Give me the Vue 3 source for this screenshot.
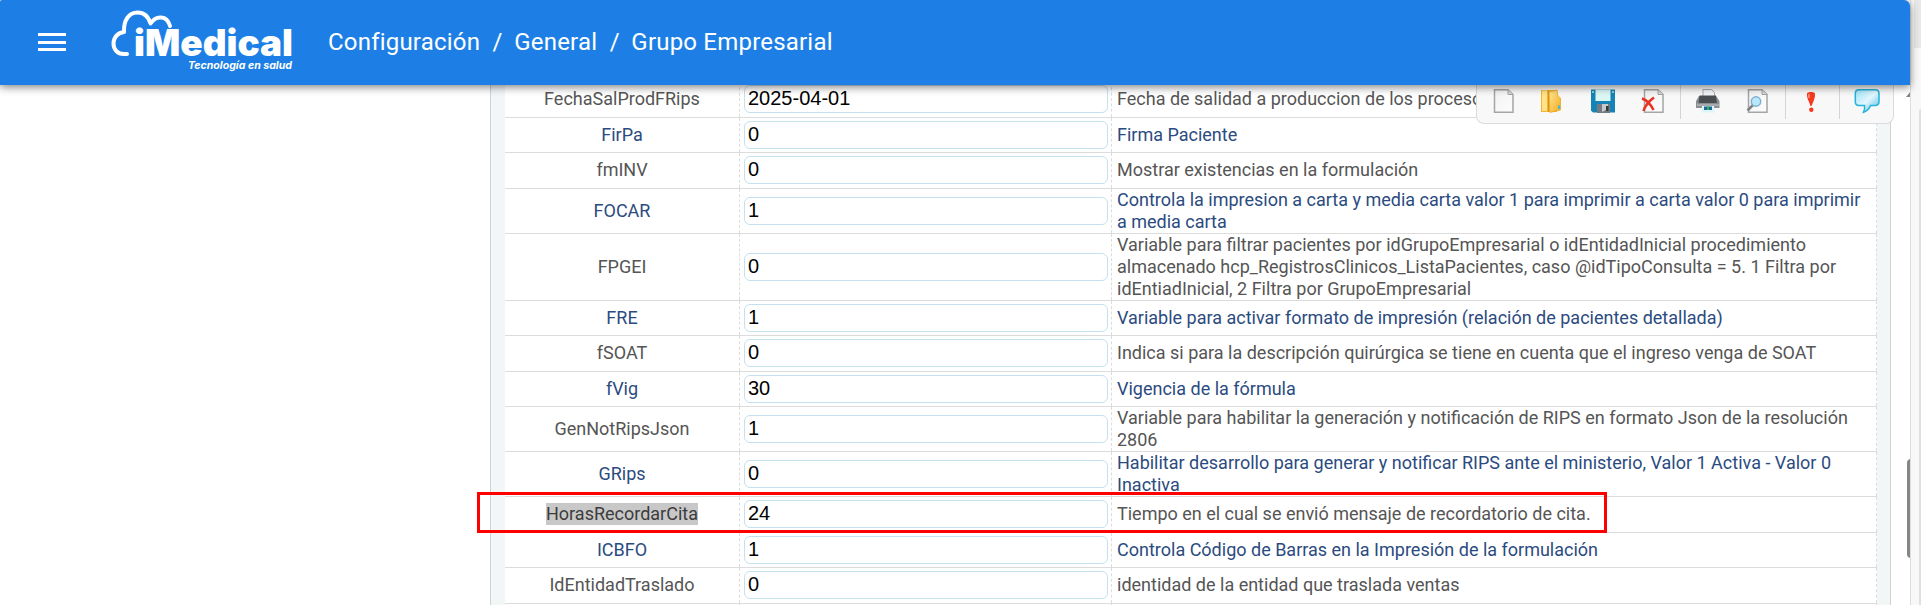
<script setup>
const crumbs = ["Configuración", "General", "Grupo Empresarial"];

const rows = [
  { name: "FechaSalProdFRips", value: "2025-04-01", lines: ["Fecha de salidad a produccion de los procesos"], height: 36 },
  { name: "FirPa", value: "0", lines: ["Firma Paciente"], height: 35 },
  { name: "fmINV", value: "0", lines: ["Mostrar existencias en la formulación"], height: 36 },
  {
    name: "FOCAR",
    value: "1",
    lines: [
      "Controla la impresion a carta y media carta valor 1 para imprimir a carta valor 0 para imprimir",
      "a media carta",
    ],
    height: 45,
  },
  {
    name: "FPGEI",
    value: "0",
    lines: [
      "Variable para filtrar pacientes por idGrupoEmpresarial o idEntidadInicial procedimiento",
      "almacenado hcp_RegistrosClinicos_ListaPacientes, caso @idTipoConsulta = 5. 1 Filtra por",
      "idEntiadInicial, 2 Filtra por GrupoEmpresarial",
    ],
    height: 67,
  },
  { name: "FRE", value: "1", lines: ["Variable para activar formato de impresión (relación de pacientes detallada)"], height: 35 },
  { name: "fSOAT", value: "0", lines: ["Indica si para la descripción quirúrgica se tiene en cuenta que el ingreso venga de SOAT"], height: 36 },
  { name: "fVig", value: "30", lines: ["Vigencia de la fórmula"], height: 35 },
  {
    name: "GenNotRipsJson",
    value: "1",
    lines: ["Variable para habilitar la generación y notificación de RIPS en formato Json de la resolución", "2806"],
    height: 45,
  },
  {
    name: "GRips",
    value: "0",
    lines: ["Habilitar desarrollo para generar y notificar RIPS ante el ministerio, Valor 1 Activa - Valor 0", "Inactiva"],
    height: 45,
  },
  {
    name: "HorasRecordarCita",
    value: "24",
    lines: ["Tiempo en el cual se envió mensaje de recordatorio de cita."],
    height: 36,
    selected: true,
  },
  { name: "ICBFO", value: "1", lines: ["Controla Código de Barras en la Impresión de la formulación"], height: 35 },
  { name: "IdEntidadTraslado", value: "0", lines: ["identidad de la entidad que traslada ventas"], height: 36 },
  { name: "", value: "", lines: [], height: 35 },
];
</script>

<template>
  <div class="page">
    <header class="header">
      <div class="menu"><i></i><i></i><i></i></div>
      <svg class="logo" width="184" height="65" viewBox="0 0 184 65">
        <path
          class="cloud"
          d="M16 45H13C6 45 2.500 40 2.500 34.500C2.500 28.500 7 23.500 13 23C12.500 11 18 3.500 26.500 3.500C33 3.500 37.500 8 39.500 14.500C45 6 56 6 59 17"
        />
        <text class="brand" x="23" y="46.5" textLength="159" lengthAdjust="spacingAndGlyphs">iMedical</text>
        <text class="slogan" x="77" y="59.5" textLength="104" lengthAdjust="spacingAndGlyphs">Tecnología en salud</text>
      </svg>
      <nav class="crumbs">
        <template v-for="(crumb, i) in crumbs" :key="crumb">
          <span v-if="i" class="slash">/</span>
          <span>{{ crumb }}</span>
        </template>
      </nav>
    </header>

    <main class="body">
      <div class="panel">
        <div class="table">
          <div
            v-for="(row, i) in rows"
            :key="i"
            class="row"
            :class="{ alt: i % 2 === 1, loose: row.height === 36 }"
            :style="{ height: row.height + 'px' }"
          >
            <div class="name">
              <span :class="{ selected: row.selected }">{{ row.name }}</span>
            </div>
            <div class="value">
              <div class="input">{{ row.value }}</div>
            </div>
            <div class="desc">
              <div v-for="line in row.lines" :key="line">{{ line }}</div>
            </div>
            <div v-if="row.selected" class="highlight"></div>
          </div>
        </div>
      </div>
      <div class="scroll">
        <div class="arrow"></div>
        <div class="thumb"></div>
      </div>
    </main>

    <aside class="side">
      <div class="side-top"></div>
      <div class="side-card"></div>
    </aside>

    <div class="toolbar">
      <svg width="417" height="40" viewBox="1477 84 417 40">
        <defs>
          <linearGradient id="paper" x1="0" y1="0" x2="1" y2="1">
            <stop offset="0" stop-color="#f1f1f1" />
            <stop offset="1" stop-color="#fdfdfd" />
          </linearGradient>
          <linearGradient id="gold" x1="0" y1="0" x2="1" y2="1">
            <stop offset="0" stop-color="#ffe79a" />
            <stop offset="1" stop-color="#f2ac1c" />
          </linearGradient>
          <linearGradient id="bubble" x1="0" y1="0" x2="1" y2="1">
            <stop offset="0" stop-color="#9be4f8" />
            <stop offset="0.5" stop-color="#e2f6fd" />
            <stop offset="1" stop-color="#4bb9e8" />
          </linearGradient>
        </defs>
        <path class="sep" d="M1680.5 84V119M1785.5 84V119M1839.5 84V119" />
        <!-- new -->
        <path class="sheet" d="M1494.500 89.700H1508L1513 94.500V112.300H1494.500Z" />
        <path class="fold" d="M1508 90V94.500H1513" />
        <!-- open -->
        <path d="M1541 90H1557V112H1541Z" fill="#f3b52d" />
        <path d="M1542 90.500H1547V111H1542Z" fill="#ffe28a" />
        <path d="M1549 92L1557 90L1558 96L1560.500 98V110L1550 112.500Z" fill="url(#gold)" stroke="#e8a41b" stroke-width="0.700" />
        <path d="M1548.500 90.500V112" stroke="#d99418" />
        <path d="M1558 105.500H1560V109H1558Z" fill="#45b6d4" />
        <!-- save -->
        <path d="M1591 89.500H1615V112.500H1593L1591 110.500Z" fill="#1583b5" />
        <path d="M1595.500 89.500H1610.500V101H1595.500Z" fill="#dcf6f3" />
        <path d="M1597 104H1610V113H1597Z" fill="#737b80" />
        <path d="M1602 104H1608V109L1602 112Z" fill="#c5cacc" />
        <path d="M1606 106H1608.500V111H1606Z" fill="#34393b" />
        <path d="M1592 91H1594V93H1592ZM1612 91H1614V93H1612Z" fill="#7fd0e4" />
        <!-- delete -->
        <path class="sheet" d="M1644.500 89.700H1658L1663 94.500V112.300H1644.500Z" />
        <path class="fold" d="M1658 90V94.500H1663" />
        <path d="M1642 98.500C1647 100 1651 105 1653.500 110M1654 97.500C1649 101 1645 106 1643.500 111" class="cross" />
        <!-- print -->
        <path d="M1703 89.500H1711.500L1714.500 92.500V98H1703Z" fill="#f2f5f6" stroke="#a6abad" />
        <path d="M1699 96H1716L1719.500 101V108H1696V101Z" fill="#8a8e90" />
        <path d="M1699.500 95.500H1716L1717 103H1698.500Z" fill="#4b4e50" />
        <path d="M1697 105H1719" stroke="#c6c9ca" />
        <path d="M1702 106H1714L1715 112.500H1701.500Z" fill="#def3fa" />
        <path d="M1704 106.500H1712V110H1704Z" fill="#166d94" />
        <path d="M1707 106.500H1709V110H1707Z" fill="#46a863" />
        <!-- preview -->
        <path class="sheet" d="M1748.500 89.700H1762L1767 94.500V112.300H1748.500Z" />
        <path class="fold" d="M1762 90V94.500H1767" />
        <path d="M1753 105L1747.500 110.500" stroke="#7e8283" stroke-width="2.500" />
        <circle cx="1756" cy="101.500" r="4.700" fill="#b9e7fb" stroke="#7fb0d0" stroke-width="1.500" />
        <!-- alert -->
        <path d="M1807 93.500C1808 91.500 1814 91.500 1815 93.500C1815.500 98 1813 102 1811.500 106H1810.500C1809.500 102 1806.500 98 1807 93.500Z" fill="#f5391f" />
        <circle cx="1811.300" cy="109.800" r="2.200" fill="#f5391f" />
        <path d="M1809 94V98" stroke="#ff9a80" stroke-width="1.500" />
        <!-- chat -->
        <path
          d="M1859 89.800H1875C1878 89.800 1879 91 1879 93.500V101.500C1879 104.500 1877.500 105.500 1875 105.500H1870.500C1869.500 108.500 1867 111 1863.500 112.300C1864.500 110 1865 108 1864.500 105.500H1859C1856.500 105.500 1855.300 104 1855.300 101.500V93.500C1855.300 91 1856.500 89.800 1859 89.800Z"
          fill="url(#bubble)"
          stroke="#23b3dc"
          stroke-width="1.500"
        />
      </svg>
    </div>
  </div>
</template>

<style>
body {
  margin: 0;
  overflow: hidden;
}
</style>

<style scoped>
.page {
  position: relative;
  display: grid;
  grid-template-columns: 1911px 10px;
  grid-template-rows: 85px 520px;
  width: 1921px;
  height: 605px;
  overflow: hidden;
  background: #fff;
  font-family: Roboto, sans-serif;
}

.header {
  position: relative;
  z-index: 3;
  display: flex;
  align-items: center;
  box-sizing: border-box;
  width: 1910px;
  padding-left: 38px;
  color: #fff;
  background: #1d7fe5;
  border-radius: 2px 6px 0 0;
  box-shadow: 0 2px 9px rgba(0, 0, 0, 0.5);
}

.menu {
  display: flex;
  flex-direction: column;
  gap: 4.5px;
  width: 28px;
  margin-top: -1px;
}

.menu i {
  height: 3px;
  background: #fff;
}

.logo {
  margin: -2px 0 0 45px;
  overflow: visible;
}

.cloud {
  fill: none;
  stroke: #fff;
  stroke-width: 4;
  stroke-linecap: round;
  stroke-linejoin: round;
}

.brand {
  fill: #fff;
  font: 900 36.5px Inter, sans-serif;
}

.slogan {
  fill: #fff;
  font: italic 700 10.5px Inter, sans-serif;
}

.crumbs {
  display: flex;
  margin: -2px 0 0 33px;
  font-size: 24px;
  line-height: 32px;
  letter-spacing: 0.2px;
  white-space: nowrap;
}

.slash {
  margin: 0 11.5px 0 12.5px;
}

.body {
  display: flex;
  height: 520px;
  overflow: hidden;
}

.panel {
  box-sizing: border-box;
  width: 1401px;
  margin-left: 490px;
  padding: 0 13px 0 14px;
  background: #f3f6f7;
  border: solid #cfd3d5;
  border-width: 0 1px;
}

.table {
  margin-top: -3px;
  background: #fff;
}

.row {
  position: relative;
  display: flex;
  box-sizing: border-box;
  color: #555;
  font-size: 18px;
  line-height: 22px;
  border-bottom: 1px solid #dcdcdc;
}

.alt {
  color: #2b4b80;
}

.name,
.value,
.desc {
  display: flex;
  flex: none;
  box-sizing: border-box;
  border-right: 1px dashed #dcdcdc;
}

.loose .name,
.loose .value,
.loose .desc {
  padding-bottom: 1px;
}

.name {
  align-items: center;
  justify-content: center;
  width: 235px;
}

.selected {
  color: #3c3c3c;
  background: #c8c8c8;
}

.value {
  align-items: center;
  width: 372px;
  padding-left: 4px;
}

.input {
  box-sizing: border-box;
  width: 364px;
  height: 28px;
  padding-left: 3px;
  color: #000;
  font: 20px/24px "Liberation Sans", sans-serif;
  background: #fff;
  border: 1px solid #c5e1ef;
  border-radius: 6px;
}

.desc {
  flex: 1;
  flex-direction: column;
  justify-content: center;
  padding-left: 5px;
  white-space: nowrap;
}

.highlight {
  position: absolute;
  z-index: 1;
  top: -5px;
  left: -28px;
  box-sizing: border-box;
  width: 1130px;
  height: 41px;
  border: 3px solid #f00;
}

.scroll {
  display: flex;
  flex-direction: column;
  width: 5px;
  margin-left: 15px;
  overflow: hidden;
}

.arrow {
  width: 0;
  height: 0;
  margin-top: 6px;
  border: solid transparent;
  border-width: 0 0 6px 5px;
  border-bottom-color: #858585;
}

.thumb {
  width: 8px;
  height: 99px;
  margin: 362px 0 0 1px;
  background: #858585;
  border-radius: 4px;
}

.side {
  grid-row: 1 / 3;
  grid-column: 2;
  box-sizing: border-box;
  width: 11px;
  margin-left: -1px;
  padding-left: 3px;
  background: #f8f8f8;
  border-left: 1px solid #dedede;
}

.side-top {
  height: 48px;
  background: #e8e8e8;
}

.side-card {
  height: 600px;
  margin: 61px 0 0 5px;
  border: 1px solid #e0e0e0;
  border-radius: 8px 0 0 0;
}

.toolbar {
  position: absolute;
  z-index: 2;
  top: 84px;
  left: 1476px;
  box-sizing: border-box;
  width: 418px;
  height: 40px;
  overflow: hidden;
  background: #f8f8f8;
  border: solid #d9dcdd;
  border-width: 0 1px 1px;
  border-radius: 0 0 8px 8px;
}

.sep {
  stroke: #d5d5d5;
}

.sheet {
  fill: url(#paper);
  stroke: #a5a5a5;
  stroke-width: 1.5;
}

.fold {
  fill: #d8d8d8;
  stroke: #a5a5a5;
}

.cross {
  fill: none;
  stroke: #e93223;
  stroke-width: 2.6;
}
</style>
